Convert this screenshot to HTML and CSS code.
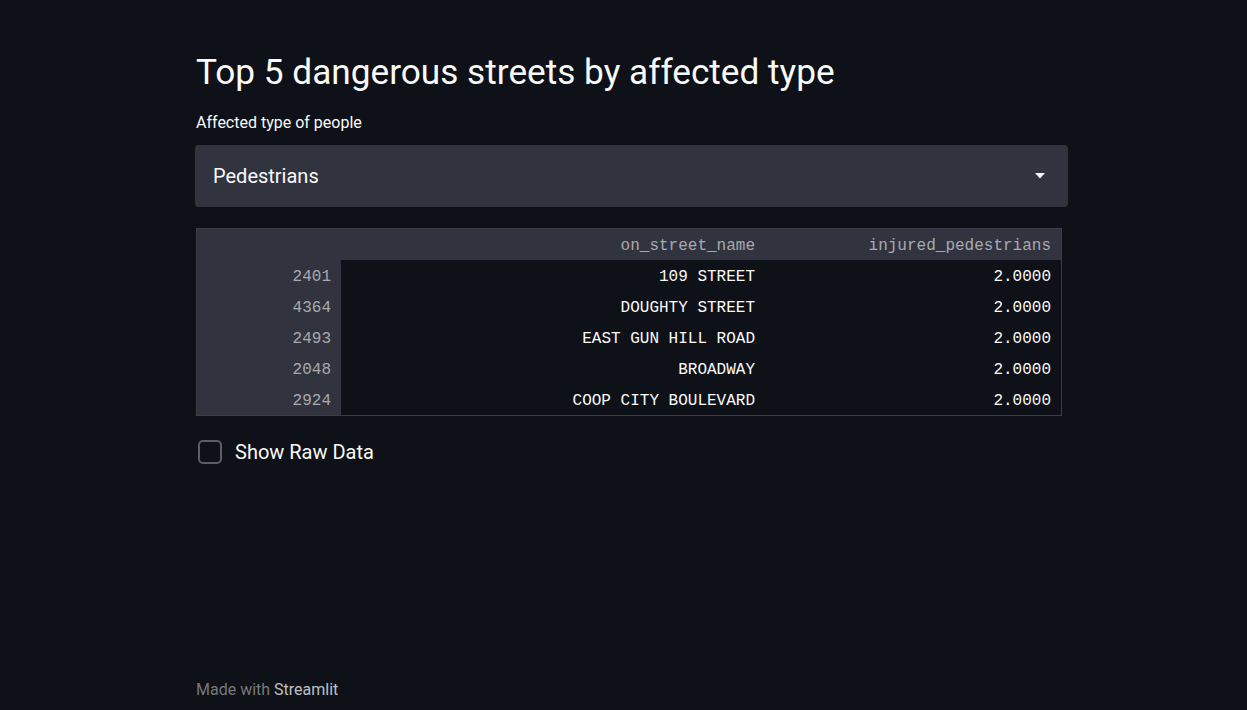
FILE: index.html
```html
<!DOCTYPE html>
<html>
<head>
<meta charset="utf-8">
<link rel="stylesheet" href="styles.css">
</head>
<body>
<div class="page">
  <main class="main">
    <h1 class="title">Top 5 dangerous streets by affected type</h1>
    <div class="field">
      <label class="field-label">Affected type of people</label>
      <div class="select">
        <span class="select-value">Pedestrians</span>
        <svg class="caret" width="10" height="6" viewBox="0 0 10 6"><path d="M0 0 L10 0 L5 5.5 Z" fill="#fafafa"/></svg>
      </div>
    </div>
    <div class="table-wrap">
      <table class="df">
        <thead>
          <tr><th class="idx"></th><th class="c1">on_street_name</th><th class="c2">injured_pedestrians</th></tr>
        </thead>
        <tbody>
          <tr><th class="idx">2401</th><td>109 STREET</td><td>2.0000</td></tr>
          <tr><th class="idx">4364</th><td>DOUGHTY STREET</td><td>2.0000</td></tr>
          <tr><th class="idx">2493</th><td>EAST GUN HILL ROAD</td><td>2.0000</td></tr>
          <tr><th class="idx">2048</th><td>BROADWAY</td><td>2.0000</td></tr>
          <tr><th class="idx">2924</th><td>COOP CITY BOULEVARD</td><td>2.0000</td></tr>
        </tbody>
      </table>
    </div>
    <label class="check">
      <span class="box"></span>
      <span class="check-label">Show Raw Data</span>
    </label>
  </main>
  <footer class="footer">Made with <span class="brand">Streamlit</span></footer>
</div>
</body>
</html>
```
FILE: styles.css
```css
html, body {
  margin: 0;
  padding: 0;
  background: #0e1117;
  color: #fafafa;
  font-family: Roboto, "Noto Sans", sans-serif;
}
.page {
  height: 710px;
  display: flex;
  flex-direction: column;
  padding-left: 196px;
  box-sizing: border-box;
}
.main {
  width: 872px;
  flex: 1;
  padding-top: 51px;
}
.title {
  margin: 0;
  font-size: 35.2px;
  font-weight: 400;
  line-height: 43px;
  letter-spacing: 0;
}
.field {
  margin-top: 19px;
}
.field-label {
  display: block;
  font-size: 16px;
  line-height: 20px;
}
.select {
  margin-top: 12px;
  margin-left: -1px;
  height: 62px;
  background: #31333f;
  border-radius: 4px;
  display: flex;
  align-items: center;
  justify-content: space-between;
  padding: 0 23px 0 18px;
  box-sizing: border-box;
}
.select-value {
  font-size: 20px;
}
.caret {
  display: block;
}
.table-wrap {
  margin-top: 21px;
  width: 866px;
  border: 1px solid #3a3c47;
  box-sizing: border-box;
  background: #31333f;
}
.df {
  border-collapse: collapse;
  width: 100%;
  table-layout: fixed;
  font-family: "Liberation Mono", "DejaVu Sans Mono", monospace;
  font-size: 16px;
}
.df th, .df td {
  padding: 2px 10px 0;
  text-align: right;
  font-weight: 400;
  white-space: nowrap;
  box-sizing: border-box;
}
.df thead th {
  height: 31px;
  color: rgba(250,250,250,0.6);
  background: #31333f;
}
.df tbody th, .df tbody td {
  height: 31px;
}
.df th.idx {
  color: rgba(250,250,250,0.6);
  background: #31333f;
}
.df thead th.idx {
  width: 144px;
}
.df thead th.c1 {
  width: 424px;
}
.df td {
  background: #0e1117;
  color: #fafafa;
}
.check {
  margin-top: 24px;
  display: flex;
  align-items: center;
  gap: 13px;
  padding-left: 2px;
}
.box {
  width: 24px;
  height: 24px;
  border: 2px solid #5b5e69;
  border-radius: 5px;
  box-sizing: border-box;
}
.check-label {
  font-size: 20px;
}
.footer {
  height: 30px;
  font-size: 16px;
  color: rgba(250,250,250,0.45);
  box-sizing: border-box;
}
.brand {
  color: rgba(250,250,250,0.75);
}
```
